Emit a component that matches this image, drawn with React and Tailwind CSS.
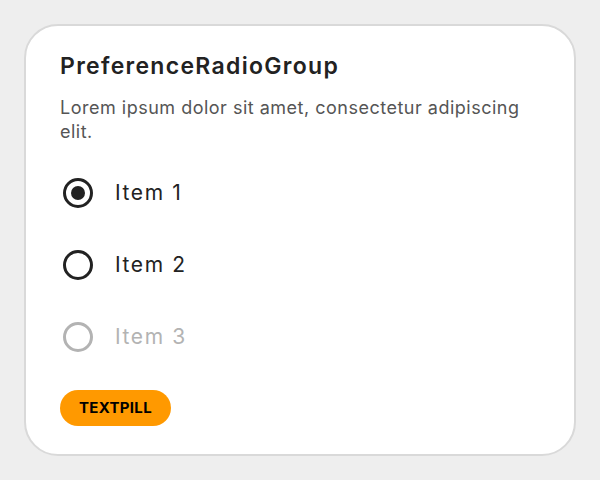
import React, { useState } from "react";

const items = [
  { id: 1, label: "Item 1" },
  { id: 2, label: "Item 2" },
  { id: 3, label: "Item 3", disabled: true },
];

const Radio = ({ checked, disabled }) => (
  <span
    className={`ml-[3px] flex items-center justify-center w-[30px] h-[30px] rounded-full border-[3px] ${
      disabled ? "border-[#b3b3b3]" : "border-[#222222]"
    }`}
  >
    {checked && <span className="w-[14px] h-[14px] rounded-full bg-[#222222]" />}
  </span>
);

export default function App() {
  const [value, setValue] = useState(1);

  return (
    <div className="w-[600px] h-[480px] bg-[#eeeeee] p-[24px] font-['Inter','Liberation_Sans',sans-serif]">
      <div className="h-full bg-white border-2 border-[#d9d9d9] rounded-[34px] px-[34px] pt-[24px]">
        <h1 className="text-[23px] leading-[32px] font-semibold tracking-[1.3px] text-[#222222]">
          PreferenceRadioGroup
        </h1>
        <p className="mt-[14px] text-[18px] leading-[24px] tracking-[0.5px] text-[#555555]">
          Lorem ipsum dolor sit amet, consectetur adipiscing elit.
        </p>

        <div className="mt-[13px] flex flex-col">
          {items.map((item) => (
            <button
              key={item.id}
              disabled={item.disabled}
              onClick={() => setValue(item.id)}
              className="flex items-center gap-[22px] h-[72px] text-left"
            >
              <Radio checked={value === item.id} disabled={item.disabled} />
              <span
                className={`text-[21px] tracking-[1.6px] ${
                  item.disabled ? "text-[#b3b3b3]" : "text-[#222222]"
                }`}
              >
                {item.label}
              </span>
            </button>
          ))}
        </div>

        <div className="mt-[17px]">
          <span className="inline-flex items-center h-[36px] pl-[19px] pr-[19px] rounded-full bg-[#ff9900] text-[15px] font-bold tracking-[0.3px] text-black">
            TEXTPILL
          </span>
        </div>
      </div>
    </div>
  );
}
